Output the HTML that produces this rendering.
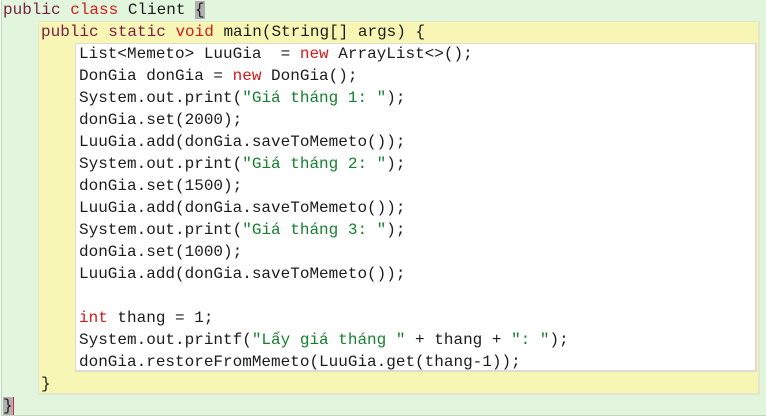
<!DOCTYPE html><html><head><meta charset="utf-8"><style>
body{margin:0;width:766px;height:417px;background:#fff;position:relative;overflow:hidden;font-family:"Liberation Mono",monospace;font-size:16px;color:#1c1c1c}
.g{position:absolute;left:1px;top:0;width:764px;height:415px;background:#e2f6de;border-left:1px solid #b9dcb4;border-bottom:1px solid #c3d8bf}
.y{position:absolute;left:38px;top:21px;width:719px;height:371px;background:#f8f6b4;border:1px solid #e6e6ce;border-right:2px solid #e6e6ce;border-bottom:2px solid #e6e6ce}
.w{position:absolute;left:75px;top:43px;width:679px;height:326px;background:#fff;border:1px solid #dcdcd0;border-right:2px solid #dcdcd0;border-bottom:2px solid #dcdcd0}
.l{position:absolute;white-space:pre;line-height:22px;height:22px}
.k{color:#7a1f45}.r{color:#d41a1a}.s{color:#17802e}
.hl{background:#b0b0b0}
</style></head><body>
<div class="g"></div><div class="y"></div><div class="w"></div>
<div class="l" style="left:3px;top:-1px"><span class="k">public</span> <span class="r">class</span> Client <span class="hl">{</span></div>
<div class="l" style="left:41px;top:21px"><span class="k">public</span> <span class="k">static</span> <span class="r">void</span> main(String[] args) {</div>
<div class="l" style="left:79px;top:43px">List&lt;Memeto&gt; LuuGia  = <span class="r">new</span> ArrayList&lt;&gt;();</div>
<div class="l" style="left:79px;top:65px">DonGia donGia = <span class="r">new</span> DonGia();</div>
<div class="l" style="left:79px;top:87px">System.out.print(<span class="s">"Giá tháng 1: "</span>);</div>
<div class="l" style="left:79px;top:109px">donGia.set(2000);</div>
<div class="l" style="left:79px;top:131px">LuuGia.add(donGia.saveToMemeto());</div>
<div class="l" style="left:79px;top:153px">System.out.print(<span class="s">"Giá tháng 2: "</span>);</div>
<div class="l" style="left:79px;top:175px">donGia.set(1500);</div>
<div class="l" style="left:79px;top:197px">LuuGia.add(donGia.saveToMemeto());</div>
<div class="l" style="left:79px;top:219px">System.out.print(<span class="s">"Giá tháng 3: "</span>);</div>
<div class="l" style="left:79px;top:241px">donGia.set(1000);</div>
<div class="l" style="left:79px;top:263px">LuuGia.add(donGia.saveToMemeto());</div>
<div class="l" style="left:79px;top:307px"><span class="r">int</span> thang = 1;</div>
<div class="l" style="left:79px;top:329px">System.out.printf(<span class="s">"Lấy giá tháng "</span> + thang + <span class="s">": "</span>);</div>
<div class="l" style="left:79px;top:351px">donGia.restoreFromMemeto(LuuGia.get(thang-1));</div>
<div class="l" style="left:41px;top:373px">}</div>
<div class="l" style="left:3px;top:395px"><span class="hl" style="border-right:1px solid #e0204a">}</span></div>
</body></html>
